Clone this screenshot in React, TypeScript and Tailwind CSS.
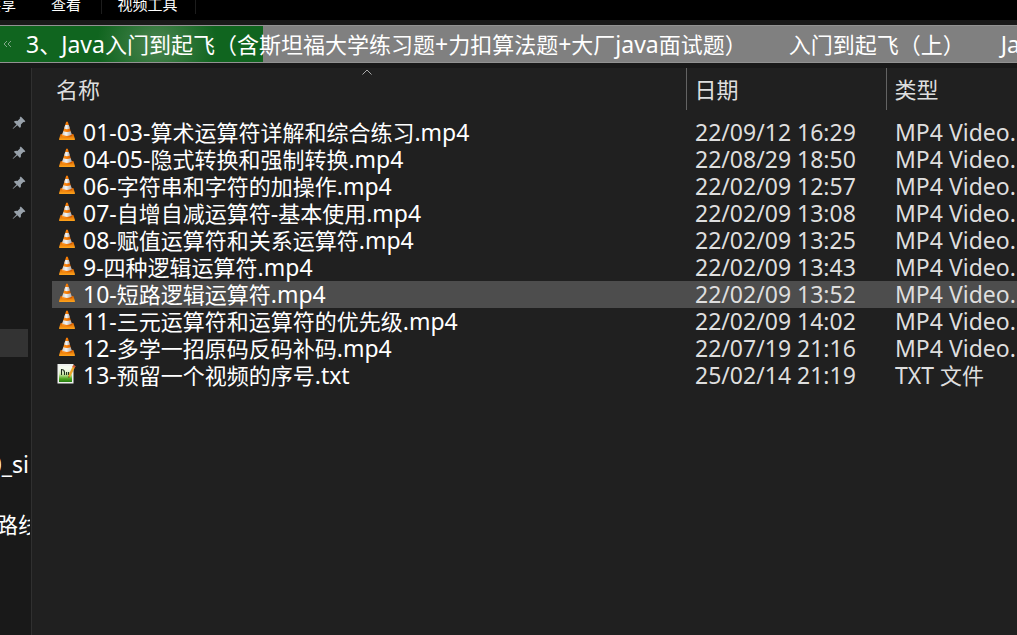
import React from "react";

type FileRow = { name: string; date: string; type: string; kind: "video" | "text"; active?: boolean };

const files: FileRow[] = [
  { name: "01-03-算术运算符详解和综合练习.mp4", date: "22/09/12 16:29", type: "MP4 Video...", kind: "video" },
  { name: "04-05-隐式转换和强制转换.mp4", date: "22/08/29 18:50", type: "MP4 Video...", kind: "video" },
  { name: "06-字符串和字符的加操作.mp4", date: "22/02/09 12:57", type: "MP4 Video...", kind: "video" },
  { name: "07-自增自减运算符-基本使用.mp4", date: "22/02/09 13:08", type: "MP4 Video...", kind: "video" },
  { name: "08-赋值运算符和关系运算符.mp4", date: "22/02/09 13:25", type: "MP4 Video...", kind: "video" },
  { name: "9-四种逻辑运算符.mp4", date: "22/02/09 13:43", type: "MP4 Video...", kind: "video" },
  { name: "10-短路逻辑运算符.mp4", date: "22/02/09 13:52", type: "MP4 Video...", kind: "video", active: true },
  { name: "11-三元运算符和运算符的优先级.mp4", date: "22/02/09 14:02", type: "MP4 Video...", kind: "video" },
  { name: "12-多学一招原码反码补码.mp4", date: "22/07/19 21:16", type: "MP4 Video...", kind: "video" },
  { name: "13-预留一个视频的序号.txt", date: "25/02/14 21:19", type: "TXT 文件", kind: "text" },
];

/* Latin runs are set one pixel larger than the Chinese around them. */
function Mixed({ text }: { text: string }) {
  return (
    <>
      {text.split(/([\x20-\x7e]+)/).map((part, i) =>
        i % 2 ? (
          <span key={i} className="text-[23px] leading-none">{part}</span>
        ) : (
          part
        ),
      )}
    </>
  );
}

function ConeIcon() {
  return (
    <svg viewBox="0 0 18 20" className="h-5 w-[18px] shrink-0" aria-hidden="true">
      <defs>
        <linearGradient id="cone" x1="0" x2="1">
          <stop offset="0" stopColor="#ff9a2b" />
          <stop offset=".5" stopColor="#f67c05" />
          <stop offset="1" stopColor="#c65200" />
        </linearGradient>
        <linearGradient id="band" x1="0" x2="1">
          <stop offset="0" stopColor="#c9c9c9" />
          <stop offset=".4" stopColor="#f4f4f4" />
          <stop offset="1" stopColor="#a9a9a9" />
        </linearGradient>
        <linearGradient id="base" x1="0" x2="0" y1="0" y2="1">
          <stop offset="0" stopColor="#d96200" />
          <stop offset="1" stopColor="#ffa51c" />
        </linearGradient>
      </defs>
      <path d="M2.6 13h12.8l1.6 5.3q.1.8-.7.8H1.7q-.8 0-.7-.8z" fill="url(#base)" />
      <path d="M8.1.9q.9-.7 1.8 0L14.2 15q-5.2 2.8-10.4 0z" fill="url(#cone)" />
      <path d="M7.2 3.9h3.6l1.1 3.7q-2.9 1.1-5.8 0z" fill="url(#band)" />
      <path d="M5.3 10.3q3.7 1.3 7.4 0l1.1 3.5q-4.8 2.2-9.6 0z" fill="url(#band)" />
    </svg>
  );
}

function TextFileIcon() {
  return (
    <svg viewBox="0 0 20 22" className="-ml-px h-[22px] w-5 shrink-0" aria-hidden="true">
      <defs>
        <linearGradient id="sheet" x1="0" x2="0" y1="0" y2="1">
          <stop offset=".2" stopColor="#f5faef" />
          <stop offset=".5" stopColor="#d5edb0" />
          <stop offset=".8" stopColor="#4da51c" />
          <stop offset="1" stopColor="#257d12" />
        </linearGradient>
      </defs>
      <path d="M.5 1h16v19.5H.5z" fill="#eef0ee" />
      <path d="M2 3h13v16H2z" fill="url(#sheet)" />
      <path d="M4.5 6v6M4.5 6.5q3 0 3 3v2.5M9.6 9v3M11.6 9v3" fill="none" stroke="#1d2d1a" strokeWidth="1.1" />
      <path d="M16.3 2l2.2 1.2-5 10-2.2 1.8.3-3z" fill="#eda72b" />
      <path d="M16.3 2l2.2 1.2-.9 1.8-2.2-1.2z" fill="#d2573d" />
      <path d="M11.3 15l.2-1.8 1.4.8z" fill="#443420" />
    </svg>
  );
}

function PinIcon() {
  return (
    <svg viewBox="0 0 14 14" className="size-[14px]" aria-hidden="true">
      <path d="M8.8.6l4.6 4.6-1.2 1-.8-.3-2.5 2.5q.5 2-.9 3.5L5.3 9.2 1.5 12.6.6 13l.5-1L4.5 8.4 1.8 5.8q1.7-1.3 3.6-.8L8 2.5l-.3-.8z" fill="#98a1aa" />
    </svg>
  );
}

export default function App() {
  return (
    <div className="flex min-h-screen flex-col overflow-hidden bg-[#191919] font-['Noto_Sans','Noto_Sans_CJK_SC',sans-serif] text-[22px] text-white">
      <nav className="flex h-5 items-start overflow-hidden bg-black text-[15px] leading-2">
        <button className="-ml-[14px] w-[65px] text-left">共享</button>
        <button className="w-[50px] text-left">查看</button>
        <span className="h-[14px] w-px bg-[#1d1d1d]" />
        <button className="w-[93px] pr-0.5 text-center">视频工具</button>
        <span className="h-[14px] w-px bg-[#1d1d1d]" />
      </nav>

      <div className="mt-[5px] flex h-[38px] items-center overflow-hidden whitespace-nowrap border-y border-[#929292] bg-[#808080] leading-9">
        <div className="relative flex items-center self-stretch">
          <div className="absolute inset-y-0 left-0 w-[263px] bg-[#10651f]">
            <div className="h-full bg-[radial-gradient(ellipse_60px_55px_at_157px_50%,#4b8450,#10651f00)]" />
          </div>
          <button className="relative w-[26px] pl-[3px] text-left" aria-label="上级目录">
            <svg viewBox="0 0 9 8" className="h-2 w-[9px]" aria-hidden="true">
              <path d="M4 1L1 4l3 3M8 1L5 4l3 3" fill="none" stroke="#83a88a" />
            </svg>
          </button>
          <button className="relative"><Mixed text="3、Java入门到起飞（含斯坦福大学练习题+力扣算法题+大厂java面试题）" /></button>
        </div>
        <button className="ml-[42px] shrink-0">入门到起飞（上）</button>
        <button className="ml-9 shrink-0"><Mixed text="Java" /></button>
      </div>

      <div className="mt-[5px] flex flex-1">
        <aside className="flex w-[31px] shrink-0 flex-col overflow-hidden whitespace-nowrap">
          <div className="flex flex-col gap-4 pt-12 pl-3">
            <PinIcon />
            <PinIcon />
            <PinIcon />
            <PinIcon />
          </div>
          <div className="mt-[109px] mr-[3px] h-7 bg-[#333]" />
          <div className="mt-[92px] flex h-[30px] items-center justify-end pr-0.5"><Mixed text="00_si" /></div>
          <div className="mt-[30px] mr-px -ml-1 flex h-[30px] items-center overflow-x-clip">路线</div>
        </aside>

        <main className="min-w-0 flex-1 border-l border-[#303030] bg-[#202020] pl-5">
          <table className="w-full table-fixed border-collapse text-left whitespace-nowrap">
            <colgroup>
              <col className="w-[634px]" />
              <col className="w-[200px]" />
              <col />
            </colgroup>
            <thead className="text-[#dedede]">
              <tr className="h-[42px]">
                <th className="relative p-0 pl-1 font-normal">
                  名称
                  <svg viewBox="0 0 10 6" className="absolute top-px left-[310px] h-1.5 w-2.5" aria-hidden="true">
                    <path d="M.5 5.5L5 1l4.5 4.5" fill="none" stroke="#aaa" />
                  </svg>
                </th>
                <th className="border-l border-[#636363] p-0 pl-2 font-normal">日期</th>
                <th className="border-l border-[#636363] p-0 pl-2 font-normal">类型</th>
              </tr>
            </thead>
            <tbody className="before:block before:h-[9px] before:content-['']">
              {files.map((f) => (
                <tr key={f.name} className={f.active ? "h-[27px] bg-[#4d4d4d]" : "h-[27px]"}>
                  <td className="p-0">
                    <div className="flex h-[27px] items-center">
                      <span className="flex w-[31px] items-center pb-1 pl-1.5">
                        {f.kind === "video" ? <ConeIcon /> : <TextFileIcon />}
                      </span>
                      <span><Mixed text={f.name} /></span>
                    </div>
                  </td>
                  <td className="p-0 pl-[9px] text-[#dedede]">
                    <div className="h-[27px] leading-[27px]"><Mixed text={f.date} /></div>
                  </td>
                  <td className="overflow-hidden p-0 pl-[9px] text-[#dedede]">
                    <div className="h-[27px] leading-[27px]"><Mixed text={f.type} /></div>
                  </td>
                </tr>
              ))}
            </tbody>
          </table>
        </main>
      </div>
    </div>
  );
}
